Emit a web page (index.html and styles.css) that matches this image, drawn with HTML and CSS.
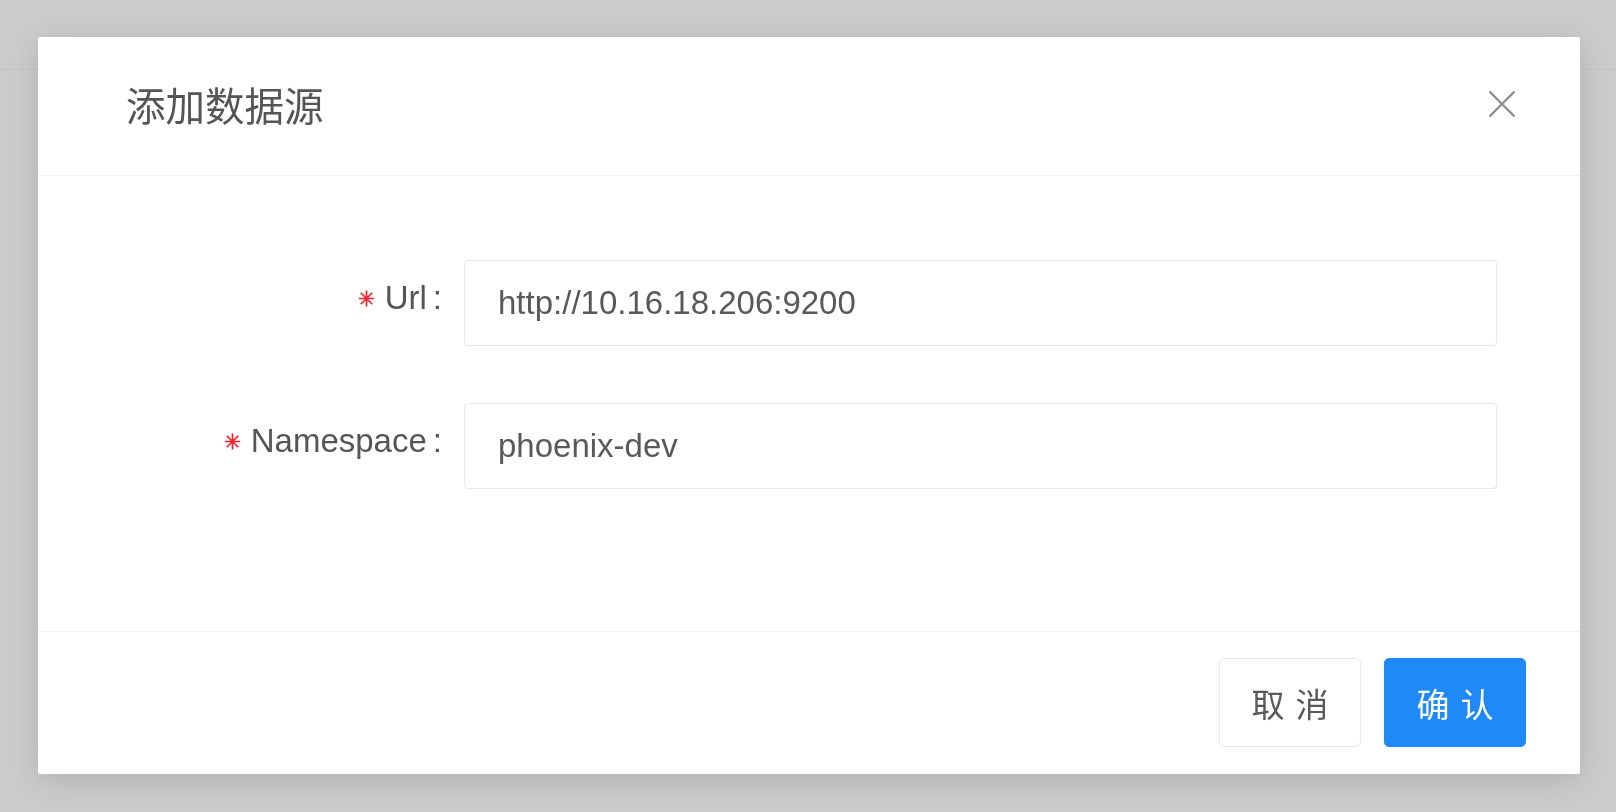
FILE: index.html
```html
<!DOCTYPE html>
<html lang="zh-CN">
<head>
<meta charset="utf-8">
<title>添加数据源</title>
<link rel="stylesheet" href="styles.css">
</head>
<body>
<div class="page">
  <div class="page-bar"></div>
</div>
<div class="mask">
  <div class="modal">
    <div class="modal-header">
      <div class="modal-title">添加数据源</div>
      <button class="modal-close" type="button" aria-label="Close">
        <svg width="28" height="28" viewBox="0 0 28 28"><path d="M1.5 1.5 L26.5 26.5 M26.5 1.5 L1.5 26.5" stroke="#8f8f8f" stroke-width="2.4" fill="none"/></svg>
      </button>
    </div>
    <div class="modal-body">
      <div class="form">
        <div class="form-row">
          <div class="form-label"><svg class="req" width="17" height="17" viewBox="0 0 16 16"><path d="M8 0.5 V15.5 M0.8 8 H15.2 M2.6 2.6 L13.4 13.4 M13.4 2.6 L2.6 13.4" stroke="#f5222d" stroke-width="1.6" fill="none"/></svg>Url<span class="colon">:</span></div>
          <div class="input">http://10.16.18.206:9200</div>
        </div>
        <div class="form-row">
          <div class="form-label"><svg class="req" width="17" height="17" viewBox="0 0 16 16"><path d="M8 0.5 V15.5 M0.8 8 H15.2 M2.6 2.6 L13.4 13.4 M13.4 2.6 L2.6 13.4" stroke="#f5222d" stroke-width="1.6" fill="none"/></svg>Namespace<span class="colon">:</span></div>
          <div class="input">phoenix-dev</div>
        </div>
      </div>
    </div>
    <div class="modal-footer">
      <button class="btn" type="button"><span>取消</span></button>
      <button class="btn btn-primary" type="button"><span>确认</span></button>
    </div>
  </div>
</div>
</body>
</html>
```
FILE: styles.css
```css
* { box-sizing: border-box; }
html, body {
  margin: 0;
  padding: 0;
  width: 1616px;
  height: 812px;
  overflow: hidden;
  background: #cbcbcb;
  font-family: "Liberation Sans", "Noto Sans CJK SC", sans-serif;
}
.page { height: 812px; }
.page-bar {
  height: 70px;
  border-bottom: 1px solid #c2c2c7;
}
.mask {
  position: fixed;
  inset: 0;
  padding: 37px 0 0 38px;
}
.modal {
  width: 1542px;
  height: 737px;
  background: #fff;
  border-radius: 2px;
  box-shadow: 0 6px 28px rgba(0, 0, 0, 0.13);
  display: flex;
  flex-direction: column;
}
.modal-header {
  height: 139px;
  flex: 0 0 139px;
  border-bottom: 1px solid #efeff4;
  display: flex;
  align-items: center;
  justify-content: space-between;
  padding: 0 64px 4px 88px;
}
.modal-title {
  font-family: "Noto Sans CJK SC", sans-serif;
  font-size: 39.5px;
  line-height: 1;
  color: #555555;
  font-weight: 400;
}
.modal-close {
  border: 0;
  background: transparent;
  padding: 0;
  width: 28px;
  height: 28px;
  display: flex;
  cursor: pointer;
}
.modal-body {
  flex: 0 0 455px;
  padding: 84px 83px 0 0;
}
.form {
  display: flex;
  flex-direction: column;
  gap: 57px;
}
.form-row {
  display: flex;
  align-items: flex-start;
}
.form-label {
  flex: 0 0 426px;
  padding: 18px 22px 0 0;
  text-align: right;
  font-size: 33px;
  line-height: 40px;
  color: #555555;
  white-space: nowrap;
}
.req {
  display: inline-block;
  vertical-align: 2px;
  margin-right: 10px;
}
.colon {
  margin-left: 6px;
}
.input {
  flex: 1;
  height: 86px;
  border: 1px solid #e7e7ed;
  border-radius: 4px;
  padding: 0 31px 0 33px;
  font-size: 33px;
  line-height: 84px;
  color: #595959;
  white-space: nowrap;
}
.modal-footer {
  flex: 1;
  border-top: 1px solid #efeff4;
  display: flex;
  align-items: center;
  justify-content: flex-end;
  gap: 23px;
  padding: 0 54px 1px 0;
}
.btn {
  width: 142px;
  height: 89px;
  border: 1px solid #e8e8ee;
  border-radius: 5px;
  background: #fff;
  color: #595959;
  font-family: "Noto Sans CJK SC", sans-serif;
  font-size: 33px;
  padding: 0;
  display: flex;
  align-items: center;
  justify-content: center;
  cursor: pointer;
}
.btn span {
  letter-spacing: 0.34em;
  margin-right: -0.34em;
}
.btn-primary {
  background: #1f8af7;
  border-color: #1f8af7;
  color: #fff;
}
```
